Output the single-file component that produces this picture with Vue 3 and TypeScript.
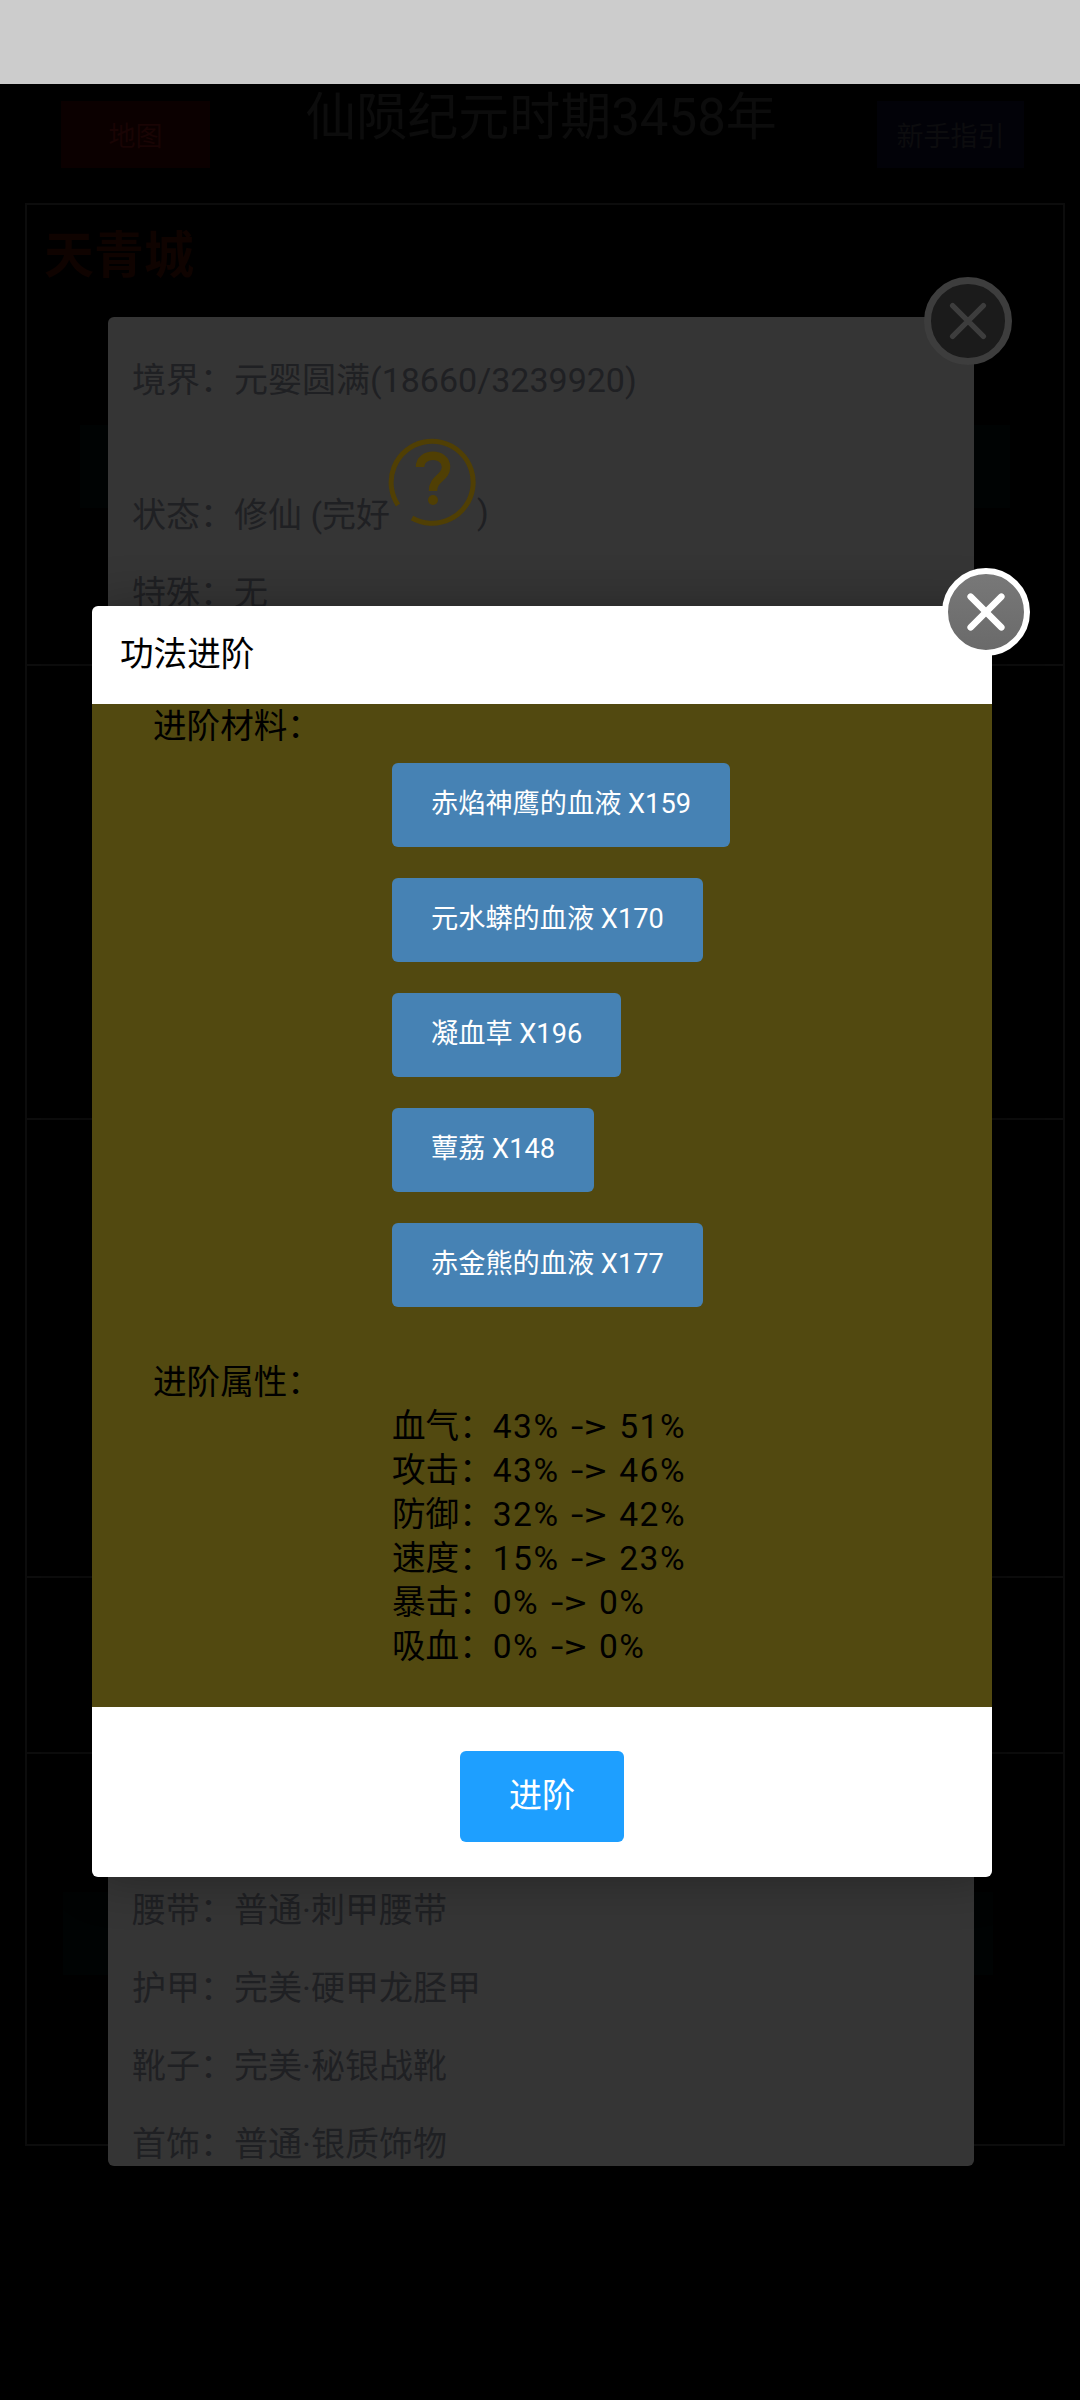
<script setup lang="ts">
const materials = ['赤焰神鹰的血液 X159', '元水蟒的血液 X170', '凝血草 X196', '蕈荔 X148', '赤金熊的血液 X177']

const stats = [
  { name: '血气', from: '43%', to: '51%' },
  { name: '攻击', from: '43%', to: '46%' },
  { name: '防御', from: '32%', to: '42%' },
  { name: '速度', from: '15%', to: '23%' },
  { name: '暴击', from: '0%', to: '0%' },
  { name: '吸血', from: '0%', to: '0%' },
]

const gear = [
  { name: '腰带', value: '普通·刺甲腰带' },
  { name: '护甲', value: '完美·硬甲龙胫甲' },
  { name: '靴子', value: '完美·秘银战靴' },
  { name: '首饰', value: '普通·银质饰物' },
]
</script>

<template>
  <div class="screen">
    <div class="status-bar"></div>

    <header class="top">
      <div class="top-btn map">地图</div>
      <div class="era">仙陨纪元时期3458年</div>
      <div class="top-btn guide">新手指引</div>
    </header>

    <section class="card card-city">
      <div class="city">天青城</div>
      <div class="band"></div>
    </section>
    <section class="card card-b"></section>
    <section class="card card-c"></section>
    <section class="card card-d"></section>
    <section class="card card-e">
      <div class="band band-low"></div>
    </section>

    <!-- character panel, dimmed behind the dialog -->
    <div class="panel">
      <div class="row">境界：元婴圆满(18660/3239920)</div>
      <div class="row row-state">
        <span>状态：修仙 (完好</span>
        <svg class="help" viewBox="0 0 90 90">
          <path d="M11 68A41 41 0 1 1 25 81" fill="none" stroke="#503f04" stroke-width="5" />
          <path d="M33 30C33 15 59 15 59 30C59 41 46 41 46 54" fill="none" stroke="#503f04" stroke-width="8.5" />
          <circle cx="46" cy="63" r="5" fill="#503f04" />
        </svg>
        <span>)</span>
      </div>
      <div class="row">特殊：无</div>
      <div class="panel-bottom">
        <div v-for="item in gear" :key="item.name" class="row">{{ item.name }}：{{ item.value }}</div>
      </div>
    </div>
    <div class="close close-dim">
      <svg viewBox="0 0 40 40"><path d="M9 9L31 31M31 9L9 31" /></svg>
    </div>

    <!-- dialog -->
    <div class="dialog">
      <div class="dialog-head">功法进阶</div>
      <div class="dialog-body">
        <div class="label">进阶材料：</div>
        <div class="materials">
          <div v-for="m in materials" :key="m" class="material">{{ m }}</div>
        </div>
        <div class="label label-attr">进阶属性：</div>
        <div class="stats">
          <div v-for="s in stats" :key="s.name" class="stat">
            {{ s.name }}：<span class="num">{{ s.from }} <span class="arrow">-&gt;</span> {{ s.to }}</span>
          </div>
        </div>
      </div>
      <div class="dialog-foot">
        <div class="confirm">进阶</div>
      </div>
      <div class="close close-top">
        <svg viewBox="0 0 40 40"><path d="M9 9L31 31M31 9L9 31" /></svg>
      </div>
    </div>
  </div>
</template>

<style>
html,
body {
  margin: 0;
  background: #000;
}
</style>

<style scoped>
.screen {
  position: relative;
  width: 1080px;
  height: 2400px;
  overflow: hidden;
  background: #000;
  font-family: Roboto, 'Noto Sans CJK SC', sans-serif;
}

.status-bar {
  height: 84px;
  background: #ccc;
}

.top {
  display: flex;
  justify-content: space-between;
  height: 119px;
  padding: 0 56px 0 61px;
}

.top-btn {
  display: flex;
  align-items: center;
  justify-content: center;
  height: 67px;
  margin-top: 17px;
  font-size: 27px;
}

.map {
  width: 149px;
  background: #0b0000;
  color: #190404;
}

.guide {
  width: 147px;
  background: #020208;
  color: #0c0c0e;
}

.era {
  margin: 6px 5px 0 0;
  font-size: 51px;
  line-height: 56px;
  color: #0c0c0c;
}

.card {
  margin: 0 15px 0 25px;
  border: 2px solid #0c0c0c;
  border-bottom: none;
  box-sizing: border-box;
}

.card-city {
  height: 461px;
  padding: 26px 17px 0;
}

.city {
  font-size: 50px;
  line-height: 50px;
  font-weight: 700;
  color: #0f0300;
}

.band {
  height: 83px;
  margin: 144px 0 0 36px;
  width: 930px;
  background: #000303;
}

.band-low {
  margin-top: 138px;
}

.card-b {
  height: 454px;
}

.card-c {
  height: 458px;
}

.card-d {
  height: 176px;
}

.card-e {
  height: 394px;
  border-bottom: 2px solid #0c0c0c;
}

.panel {
  position: absolute;
  left: 108px;
  top: 317px;
  display: flex;
  flex-direction: column;
  width: 866px;
  height: 1849px;
  box-sizing: border-box;
  padding: 21px 24px 0;
  overflow: hidden;
  border-radius: 6px;
  background: #353535;
  color: #1f2023;
  font-size: 34px;
}

.row {
  display: flex;
  align-items: center;
  height: 78px;
  white-space: pre;
}

.row-state {
  margin-top: 57px;
}

.help {
  flex: none;
  width: 90px;
  height: 90px;
  margin: 0 0 60px -3px;
}

.panel-bottom {
  margin-top: auto;
  margin-bottom: -14px;
}

.close {
  position: absolute;
  display: flex;
  align-items: center;
  justify-content: center;
  width: 88px;
  height: 88px;
  box-sizing: border-box;
  border-radius: 50%;
}

.close svg {
  width: 56px;
  height: 56px;
  fill: none;
  stroke-linecap: round;
}

.close-dim {
  left: 924px;
  top: 277px;
  border: 7px solid #3d3d3d;
  background: #1b1b1b;
}

.close-dim svg {
  stroke: #3d3d3d;
  stroke-width: 3.8;
}

.close-top {
  right: -38px;
  top: -38px;
  border: 6px solid #fff;
  background: linear-gradient(#787878, #6a6a6a);
}

.close-top svg {
  stroke: #fff;
  stroke-width: 4.6;
}

.dialog {
  position: absolute;
  left: 92px;
  top: 606px;
  width: 900px;
  border-radius: 6px;
  background: #fff;
  box-shadow: 1px 1px 50px rgba(0, 0, 0, 0.3);
}

.dialog-head {
  height: 98px;
  padding-left: 28px;
  font-size: 33.6px;
  line-height: 98px;
  color: #000;
}

.dialog-body {
  height: 1003px;
  box-sizing: border-box;
  padding: 1px 0 0 61px;
  background: #524910;
  color: #000;
  font-size: 33.6px;
  line-height: 44px;
}

.materials {
  display: flex;
  flex-direction: column;
  align-items: flex-start;
  gap: 31px;
  margin: 14px 0 0 239px;
}

.material {
  height: 84px;
  padding: 0 39px;
  border-radius: 6px;
  background: #4682b4;
  color: #fff;
  font-size: 27.2px;
  line-height: 82px;
}

.label-attr {
  margin-top: 54px;
}

.stats {
  margin-left: 239px;
}

.num {
  letter-spacing: 1.5px;
  word-spacing: 1.5px;
}

.arrow {
  display: inline-block;
  width: 37px;
  letter-spacing: 0;
  transform: scaleX(1.33);
  transform-origin: left center;
}

.dialog-foot {
  display: flex;
  justify-content: center;
  height: 170px;
  padding-top: 44px;
  box-sizing: border-box;
}

.confirm {
  width: 164px;
  height: 91px;
  border-radius: 6px;
  background: #1e9fff;
  color: #fff;
  font-size: 33px;
  line-height: 90px;
  text-align: center;
}
</style>
